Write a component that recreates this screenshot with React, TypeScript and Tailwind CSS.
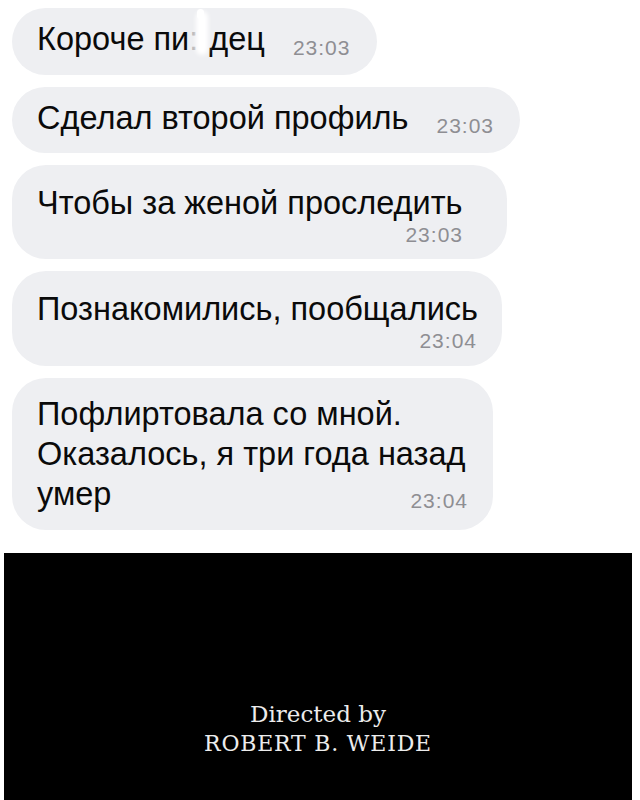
import React from "react";

const sans = { fontFamily: '"Liberation Sans", Arial, sans-serif' };
const serif = { fontFamily: '"DejaVu Serif", "Liberation Serif", serif' };

function Time({ t }: { t: string }) {
  return (
    <span className="text-[21px] tracking-[1px] text-[#8e8e93]" style={sans}>
      {t}
    </span>
  );
}

export default function App() {
  return (
    <div className="w-[640px] h-[800px] bg-white overflow-hidden flex flex-col" style={sans}>
      <div className="flex flex-col gap-[12px] pt-[8px] pl-[12px]">
        {/* Bubble 1 */}
        <div className="w-[365px] h-[67px] rounded-[34px] bg-[#eeeff2] flex items-center pl-[25px] gap-[28px]">
          <span className="text-[32.5px] text-[#0a0a0a] mt-[-4px] whitespace-nowrap">
            Короче пи
            <span className="relative inline-block w-[20px] text-[#b4b4b8]">
              :
              <span className="absolute left-[7px] top-[-4px] w-[12px] h-[44px] rounded-full bg-white blur-[2px]" />
              <span className="absolute left-[8px] top-[-6px] w-[7px] h-[10px] rounded-full bg-white" />
            </span>
            дец
          </span>
          <span className="mt-[12px]">
            <Time t="23:03" />
          </span>
        </div>
        {/* Bubble 2 */}
        <div className="w-[508px] h-[66px] rounded-[33px] bg-[#eeeff2] flex items-center pl-[25px] gap-[28px]">
          <span className="text-[32.5px] text-[#0a0a0a] mt-[-4px] whitespace-nowrap">Сделал второй профиль</span>
          <span className="mt-[12px]">
            <Time t="23:03" />
          </span>
        </div>
        {/* Bubble 3 */}
        <div className="w-[495px] h-[94px] rounded-[34px] bg-[#eeeff2] flex flex-col pl-[25px] pt-[20px]">
          <span className="text-[32.5px] leading-[36px] text-[#0a0a0a] whitespace-nowrap">Чтобы за женой проследить</span>
          <span className="self-end mt-[2px] leading-[24px] pr-[44px]">
            <Time t="23:03" />
          </span>
        </div>
        {/* Bubble 4 */}
        <div className="w-[490px] h-[95px] rounded-[34px] bg-[#eeeff2] flex flex-col pl-[25px] pt-[20px]">
          <span className="text-[32.5px] leading-[36px] text-[#0a0a0a] whitespace-nowrap">Познакомились, пообщались</span>
          <span className="self-end mt-[2px] leading-[24px] pr-[25px]">
            <Time t="23:04" />
          </span>
        </div>
        {/* Bubble 5 */}
        <div className="w-[481px] h-[152px] rounded-[34px] bg-[#eeeff2] flex flex-col pl-[25px] pr-[25px] pt-[16px]">
          <span className="text-[32.5px] leading-[40px] text-[#0a0a0a] whitespace-nowrap">Пофлиртовала со мной.</span>
          <span className="text-[32.5px] leading-[40px] text-[#0a0a0a] whitespace-nowrap">Оказалось, я три года назад</span>
          <div className="flex justify-between items-end">
            <span className="text-[32.5px] leading-[40px] text-[#0a0a0a]">умер</span>
            <span className="mb-[-2px]">
              <Time t="23:04" />
            </span>
          </div>
        </div>
      </div>
      <div className="mt-[23px] ml-[4px] w-[628px] h-[248px] bg-black flex flex-col items-center justify-end pb-[42px]">
        <div className="text-[#ececec] text-[23px] leading-[29px] text-center" style={serif}>
          Directed by
        </div>
        <div className="text-[#ececec] text-[22px] tracking-[0.8px] leading-[29px] text-center" style={serif}>
          ROBERT B. WEIDE
        </div>
      </div>
    </div>
  );
}
